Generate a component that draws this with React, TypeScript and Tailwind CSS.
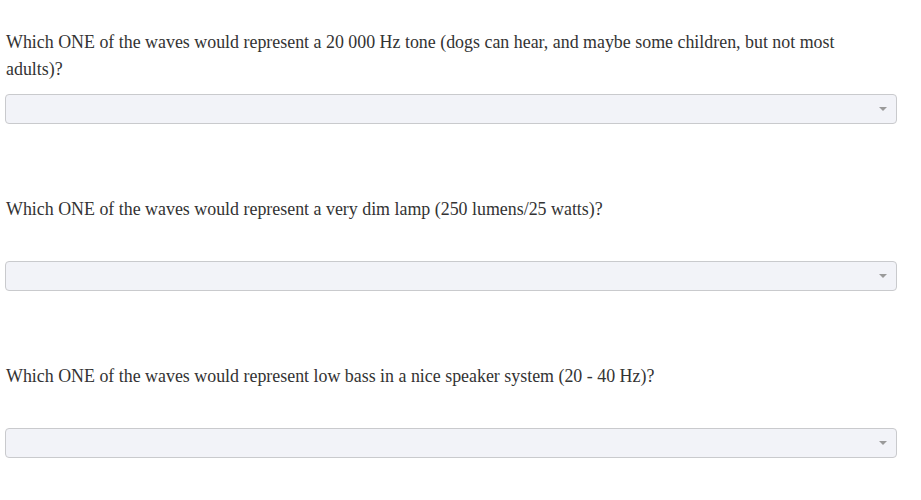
import React from "react";

const questions = [
	"Which ONE of the waves would represent a 20 000 Hz tone (dogs can hear, and maybe some children, but not most adults)?",
	"Which ONE of the waves would represent a very dim lamp (250 lumens/25 watts)?",
	"Which ONE of the waves would represent low bass in a nice speaker system (20 - 40 Hz)?",
];

function Dropdown() {
	return (
		<div className="h-[30px] w-full rounded-[4px] border border-[#c9cacd] bg-[#f2f3f8] flex items-center justify-end pr-[9px]">
			<div className="w-0 h-0 border-l-[4px] border-r-[4px] border-t-[4px] border-l-transparent border-r-transparent border-t-[#9a9a9a]" />
		</div>
	);
}

export default function App() {
	return (
		<div
			className="w-[921px] h-[500px] bg-white pl-[5px] pr-[24px] pt-[29px] text-[#333]"
			style={{ fontFamily: '"Liberation Serif", "Times New Roman", serif' }}
		>
			{questions.map((q, i) => (
				<div key={i} className="mb-[72px]">
					<p className="text-[17.9px] leading-[27px] min-h-[54px] pl-[1px] pr-[30px]">{q}</p>
					<div className="mt-[11px]">
						<Dropdown />
					</div>
				</div>
			))}
		</div>
	);
}
